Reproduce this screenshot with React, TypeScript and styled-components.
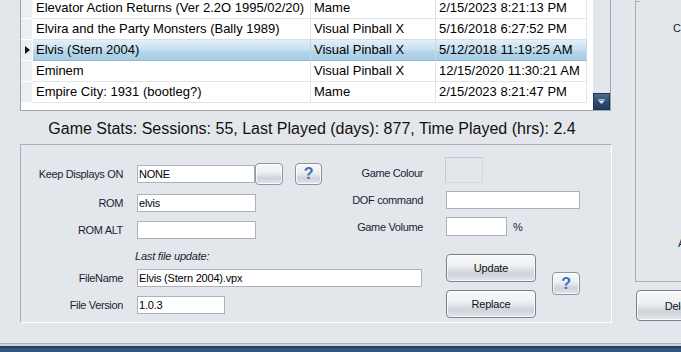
import React from 'react'
import styled, { createGlobalStyle } from 'styled-components'

const GlobalStyle = createGlobalStyle`
  * { box-sizing: border-box; }
  html, body { margin: 0; padding: 0; }
  body {
    background: #e3e7eb;
    font-family: "Liberation Sans", Arial, sans-serif;
  }
`

interface iGame {
    name: string
    emulator: string
    lastPlayed: string
    selected?: boolean
}

const games: iGame[] = [
    { name: 'Elevator Action Returns (Ver 2.2O 1995/02/20)', emulator: 'Mame', lastPlayed: '2/15/2023 8:21:13 PM' },
    { name: 'Elvira and the Party Monsters (Bally 1989)', emulator: 'Visual Pinball X', lastPlayed: '5/16/2018 6:27:52 PM' },
    { name: 'Elvis (Stern 2004)', emulator: 'Visual Pinball X', lastPlayed: '5/12/2018 11:19:25 AM', selected: true },
    { name: 'Eminem', emulator: 'Visual Pinball X', lastPlayed: '12/15/2020 11:30:21 AM' },
    { name: 'Empire City: 1931 (bootleg?)', emulator: 'Mame', lastPlayed: '2/15/2023 8:21:47 PM' },
]

const Screen = styled.div`
  width: 681px;
  height: 352px;
  overflow: hidden;
  display: flex;
  flex-direction: column;
  background: #e3e7eb;
  color: #1c1c34;
`

const Main = styled.div`
  flex: 1;
  display: flex;
  gap: 23px;
  padding-left: 20px;
  min-height: 0;
`

const LeftCol = styled.div`
  width: 592px;
  flex-shrink: 0;
  display: flex;
  flex-direction: column;
`

/* ---------- game list ---------- */

const GameGrid = styled.div`
  width: 591px;
  height: 111px;
  border: 1px solid #9aa5b3;
  border-top: none;
  display: flex;
  background: #fff;
  overflow: hidden;
`

const Rows = styled.div`
  flex: 1;
  overflow: hidden;
`

const RowsScroll = styled.div`
  margin-top: -2px;
`

const Row = styled.div`
  display: grid;
  grid-template-columns: 12px 278px 125px 151px;
  height: 21px;
`

const RowHeader = styled.div`
  background: #eceef1;
  border-right: 1px solid #fff;
  border-bottom: 1px solid #fff;
  display: flex;
  align-items: center;
  justify-content: center;
`

const RowArrow = styled.span`
  width: 0;
  height: 0;
  border-left: 5px solid #111;
  border-top: 4px solid transparent;
  border-bottom: 4px solid transparent;
  margin-left: 1px;
`

interface iCellProps {
    $selected?: boolean
}

const Cell = styled.div<iCellProps>`
  border-right: 1px solid ${({ $selected }) => $selected ? '#c2dbec' : '#e1e5ea'};
  border-bottom: 1px solid ${({ $selected }) => $selected ? '#8fbad8' : '#e1e5ea'};
  border-top: ${({ $selected }) => $selected ? '1px solid #cfe3f1' : 'none'};
  margin-top: ${({ $selected }) => $selected ? '-1px' : '0'};
  height: ${({ $selected }) => $selected ? '22px' : '21px'};
  padding-left: 3px;
  font-size: 13px;
  line-height: 20px;
  white-space: nowrap;
  overflow: hidden;
  color: #000;
  background: ${({ $selected }) => $selected
        ? 'linear-gradient(to bottom, #e2eff8 0%, #c9e1f1 45%, #b3d4ea 60%, #a9cce5 100%)'
        : '#fff'};
`

const ScrollBar = styled.div`
  width: 17px;
  display: flex;
  flex-direction: column;
  justify-content: flex-end;
  background: #e3e7eb;
`

const ScrollDown = styled.div`
  height: 17px;
  border: 1px solid #1e3350;
  background: linear-gradient(to bottom, #4d6b8f 0%, #2f4d70 50%, #223e60 100%);
  display: flex;
  align-items: center;
  justify-content: center;
`

/* ---------- stats ---------- */

const Stats = styled.div`
  height: 33px;
  display: flex;
  align-items: center;
  justify-content: center;
  padding: 2px 8px 0 0;
  font-size: 16px;
  color: #111;
  white-space: nowrap;
`

/* ---------- details group ---------- */

const Details = styled.div`
  height: 179px;
  border-top: 1px solid #a7b0bb;
  border-left: 1px solid #a7b0bb;
  border-right: 1px solid #fff;
  border-bottom: 1px solid #fff;
  display: flex;
  flex-direction: column;
  padding-top: 12px;
`

const TopSection = styled.div`
  display: flex;
  align-items: flex-start;
`

const FieldColumn = styled.div<{ $width?: number; $top?: number; $gap: number }>`
  width: ${({ $width }) => $width ? `${$width}px` : 'auto'};
  margin-top: ${({ $top }) => $top || 0}px;
  display: flex;
  flex-direction: column;
  gap: ${({ $gap }) => $gap}px;
`

const FieldRow = styled.div`
  display: flex;
  align-items: center;
`

const Label = styled.span<{ $width: number; $space: number; $low?: boolean }>`
  width: ${({ $width }) => $width}px;
  margin-right: ${({ $space }) => $space}px;
  text-align: right;
  font-size: 11px;
  letter-spacing: -0.35px;
  line-height: 14px;
  white-space: nowrap;
  ${({ $low }) => $low ? 'align-self: flex-end; margin-bottom: 3px;' : ''}
`

const TextBox = styled.input<{ $width: number; $height?: number }>`
  width: ${({ $width }) => $width}px;
  height: ${({ $height }) => $height || 18}px;
  border: 1px solid #a8b2be;
  background: #fff;
  padding: 0 1px;
  margin: 0;
  font-family: "Liberation Sans", Arial, sans-serif;
  font-size: 11px;
  letter-spacing: -0.2px;
  color: #000;
  outline: none;
`

const ColourSwatch = styled.div`
  width: 38px;
  height: 26px;
  margin-left: -1px;
  border: 1px solid #c4cad1;
  border-right-color: #d3d8dd;
  border-bottom-color: #d3d8dd;
  background: #e3e7eb;
`

const Unit = styled.span`
  margin-left: 6px;
  font-size: 11px;
`

const PushButton = styled.button<{ $width: number; $height: number }>`
  width: ${({ $width }) => $width}px;
  height: ${({ $height }) => $height}px;
  flex-shrink: 0;
  margin: 0;
  padding: 0;
  border: 1px solid #76828f;
  border-radius: 4px;
  background: linear-gradient(to bottom, #f7f8f9 0%, #eef0f2 40%, #dde1e6 58%, #cdd3da 72%, #e4e7eb 100%);
  box-shadow: inset 0 0 0 1px rgba(255, 255, 255, 0.75);
  font-family: "Liberation Sans", Arial, sans-serif;
  font-size: 11px;
  letter-spacing: -0.2px;
  color: #111;
  display: flex;
  align-items: center;
  justify-content: center;
`

const HelpButton = styled(PushButton) <{ $left?: number; $top?: number }>`
  margin-left: ${({ $left }) => $left || 0}px;
  margin-top: ${({ $top }) => $top || 0}px;
  border-color: #8995a3;
  font-size: 16px;
  font-weight: bold;
  color: #3b73bb;
`

const DotsButton = styled(PushButton)`
  border-color: #8d98a5;
`

const BottomSection = styled.div`
  margin-top: 10px;
  display: flex;
  align-items: flex-start;
`

const Note = styled.div`
  height: 14px;
  margin-left: 114px;
  font-size: 11px;
  font-style: italic;
  line-height: 14px;
  letter-spacing: -0.2px;
`

const ButtonStack = styled.div`
  margin-left: 24px;
  margin-top: 5px;
  display: flex;
  flex-direction: column;
  gap: 8px;
`

/* ---------- right side ---------- */

const RightCol = styled.div`
  width: 120px;
  flex-shrink: 0;
  display: flex;
  flex-direction: column;
`

const SidePanel = styled.div`
  height: 282px;
  border-left: 1px solid #a7b0bb;
  border-bottom: 1px solid #a7b0bb;
  display: flex;
  flex-direction: column;
  position: relative;

  &::before {
    content: '';
    position: absolute;
    left: 0;
    top: 1px;
    width: 4px;
    height: 1px;
    background: #a7b0bb;
  }
`

const SideLabel = styled.span<{ $indent: number; $top?: string; $bottom?: number }>`
  padding-left: ${({ $indent }) => $indent}px;
  margin-top: ${({ $top }) => $top || '0'};
  margin-bottom: ${({ $bottom }) => $bottom || 0}px;
  font-size: 11px;
  line-height: 14px;
  white-space: nowrap;
`

const DeleteButton = styled(PushButton)`
  margin-top: 8px;
  margin-left: 1px;
`

const BottomBar = styled.div`
  height: 9px;
  flex-shrink: 0;
  background: linear-gradient(to bottom, #a3b2c4 0, #a3b2c4 1px, #cbd4de 1px, #cbd4de 3px, #253f60 3px, #253f60 5px, #34527a 5px);
`

const App = () => {
    return <>
        <GlobalStyle />
        <Screen>
            <Main>
                <LeftCol>
                    <GameGrid>
                        <Rows>
                            <RowsScroll>
                                {games.map(g =>
                                    <Row key={g.name}>
                                        <RowHeader>{g.selected ? <RowArrow /> : null}</RowHeader>
                                        <Cell $selected={g.selected}>{g.name}</Cell>
                                        <Cell $selected={g.selected}>{g.emulator}</Cell>
                                        <Cell $selected={g.selected}>{g.lastPlayed}</Cell>
                                    </Row>
                                )}
                            </RowsScroll>
                        </Rows>
                        <ScrollBar>
                            <ScrollDown>
                                <svg width="7" height="5" viewBox="0 0 7 5">
                                    <rect x="0" y="0" width="7" height="1" fill="#9fb0c4" />
                                    <path d="M0 1.5 L7 1.5 L3.5 5 Z" fill="#dbe2ea" />
                                </svg>
                            </ScrollDown>
                        </ScrollBar>
                    </GameGrid>

                    <Stats>Game Stats: Sessions: 55, Last Played (days): 877, Time Played (hrs): 2.4</Stats>

                    <Details>
                        <TopSection>
                            <FieldColumn $width={302} $top={6} $gap={9}>
                                <FieldRow>
                                    <Label $width={102} $space={14}>Keep Displays ON</Label>
                                    <TextBox $width={118} readOnly value="NONE" />
                                    <DotsButton $width={28} $height={22} />
                                    <HelpButton $width={27} $height={22} $left={12}>?</HelpButton>
                                </FieldRow>
                                <FieldRow>
                                    <Label $width={102} $space={14}>ROM</Label>
                                    <TextBox $width={119} readOnly value="elvis" />
                                </FieldRow>
                                <FieldRow>
                                    <Label $width={102} $space={14}>ROM ALT</Label>
                                    <TextBox $width={119} readOnly value="" />
                                </FieldRow>
                            </FieldColumn>
                            <FieldColumn $gap={8}>
                                <FieldRow>
                                    <Label $width={100} $space={23} $low>Game Colour</Label>
                                    <ColourSwatch />
                                </FieldRow>
                                <FieldRow>
                                    <Label $width={100} $space={23}>DOF command</Label>
                                    <TextBox $width={134} readOnly value="" />
                                </FieldRow>
                                <FieldRow>
                                    <Label $width={100} $space={23}>Game Volume</Label>
                                    <TextBox $width={61} $height={19} readOnly value="" />
                                    <Unit>%</Unit>
                                </FieldRow>
                            </FieldColumn>
                        </TopSection>

                        <BottomSection>
                            <FieldColumn $width={401} $gap={6}>
                                <Note>Last file update:</Note>
                                <FieldColumn $gap={9}>
                                    <FieldRow>
                                        <Label $width={102} $space={14}>FileName</Label>
                                        <TextBox $width={285} readOnly value="Elvis (Stern 2004).vpx" />
                                    </FieldRow>
                                    <FieldRow>
                                        <Label $width={102} $space={14}>File Version</Label>
                                        <TextBox $width={88} readOnly value="1.0.3" />
                                    </FieldRow>
                                </FieldColumn>
                            </FieldColumn>
                            <ButtonStack>
                                <PushButton $width={90} $height={28}>Update</PushButton>
                                <PushButton $width={90} $height={28}>Replace</PushButton>
                            </ButtonStack>
                            <HelpButton $width={28} $height={23} $left={16} $top={23}>?</HelpButton>
                        </BottomSection>
                    </Details>
                </LeftCol>

                <RightCol>
                    <SidePanel>
                        <SideLabel $indent={37} $top="21px">Custom</SideLabel>
                        <SideLabel $indent={42} $top="auto" $bottom={31}>Alt</SideLabel>
                    </SidePanel>
                    <DeleteButton $width={88} $height={31}>Delete</DeleteButton>
                </RightCol>
            </Main>
            <BottomBar />
        </Screen>
    </>
}

export default App
